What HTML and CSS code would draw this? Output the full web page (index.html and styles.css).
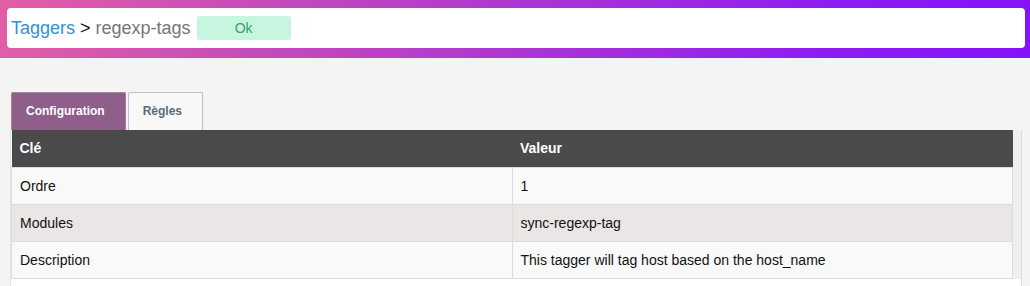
FILE: index.html
```html
<!DOCTYPE html>
<html>
<head>
<meta charset="utf-8">
<link rel="stylesheet" href="styles.css">
</head>
<body>
<header class="topbar">
  <div class="crumbs">
    <a class="crumb-link">Taggers</a>
    <span class="crumb-sep">&gt;</span>
    <span class="crumb-current">regexp-tags</span>
    <span class="badge">Ok</span>
  </div>
</header>
<main class="content">
  <nav class="tabs">
    <div class="tab tab-active">Configuration</div>
    <div class="tab">Règles</div>
  </nav>
  <div class="panel">
    <table class="kv">
      <thead>
        <tr><th>Clé</th><th>Valeur</th></tr>
      </thead>
      <tbody>
        <tr><td>Ordre</td><td>1</td></tr>
        <tr class="alt"><td>Modules</td><td>sync-regexp-tag</td></tr>
        <tr><td>Description</td><td>This tagger will tag host based on the host_name</td></tr>
      </tbody>
    </table>
    <div class="track"></div>
  </div>
</main>
</body>
</html>
```

FILE: styles.css
```css
html, body {
  margin: 0;
  padding: 0;
  background: #f4f4f4;
  font-family: "Liberation Sans", Arial, sans-serif;
  height: 286px;
  overflow: hidden;
}
.topbar {
  height: 58px;
  box-sizing: border-box;
  padding: 8px 5px 10px 7px;
  background: linear-gradient(100deg, #e15ea5 0%, #b83fc8 40%, #8f1cf2 80%, #8612f9 100%);
}
.crumbs {
  height: 40px;
  background: #fff;
  border-radius: 4px;
  display: flex;
  align-items: center;
  padding-left: 4px;
  font-size: 18px;
}
.crumb-link { color: #3590d3; }
.crumb-sep { color: #111; margin: 0 5px 0 5px; }
.crumb-current { color: #767676; }
.badge {
  margin-left: 6px;
  width: 94px;
  height: 24px;
  line-height: 24px;
  text-align: center;
  background: #c7f6e0;
  color: #3a9d6e;
  border-radius: 3px;
  font-size: 14px;
}
.content {
  padding-top: 34px;
}
.tabs {
  display: flex;
  gap: 2px;
  margin-left: 11px;
}
.tab {
  height: 38px;
  box-sizing: border-box;
  padding: 0 20px 0 14px;
  line-height: 36px;
  font-size: 12px;
  font-weight: bold;
  color: #5c6b78;
  background: #f8f8f8;
  border: 1px solid #cdb7cd;
  border-bottom: none;
  border-radius: 2px 2px 0 0;
}
.tab-active {
  background: #8f5e8b;
  border-color: #a3849f;
  color: #fff;
}
.panel {
  margin-left: 10px;
  width: 1012px;
  box-sizing: border-box;
  background: #fff;
  border-left: 1px solid #e4e4e4;
  border-right: 1px solid #dcdcdc;
  display: flex;
  align-items: flex-start;
  padding-bottom: 10px;
}
.kv {
  width: 1002px;
  border-collapse: collapse;
  font-size: 14px;
  color: #111;
  table-layout: fixed;
}
.kv th {
  background: #4a4a4a;
  color: #fff;
  text-align: left;
  font-weight: bold;
  height: 37px;
  padding: 0 8px;
  box-sizing: border-box;
}
.kv td {
  background: #f9f9f9;
  border: 1px solid #dcdcdc;
  height: 37px;
  padding: 0 8px;
  box-sizing: border-box;
}
.kv tr.alt td { background: #e9e6e5; }
.track {
  width: 8px;
  height: 149px;
  background: #efefef;
}
```
